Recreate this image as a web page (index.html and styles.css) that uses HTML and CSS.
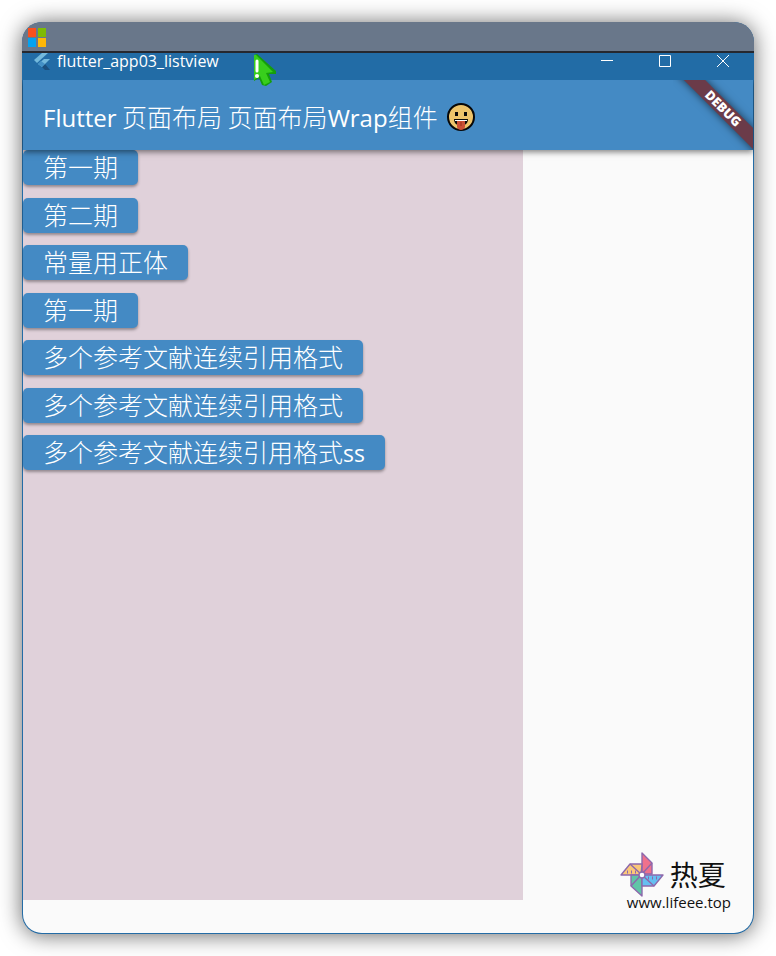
FILE: index.html
```html
<!DOCTYPE html>
<html lang="zh-CN">
<head>
<meta charset="utf-8">
<meta name="viewport" content="width=device-width, initial-scale=1">
<title>flutter_app03_listview</title>
<link rel="stylesheet" href="styles.css">
</head>
<body>
<div class="window">
  <div class="desktop-strip">
    <svg width="20" height="20" viewBox="0 0 20 20" aria-hidden="true">
      <path fill="#f8501f" d="M1 0h8v9H1z"/><path fill="#7ebb03" d="M11 0h8v9h-8z"/>
      <path fill="#04a2f0" d="M1 10h8v9H1z"/><path fill="#ffb706" d="M11 10h8v9h-8z"/>
    </svg>
  </div>
  <header class="titlebar">
    <svg class="app-icon" width="18" height="18" viewBox="0 0 18 18" aria-hidden="true">
      <path fill="#73b9dc" d="M8 0h6L3 10 0 7z"/><path fill="#73b9dc" d="M10 6h6l-5 5-3 3-4-3z"/>
      <path fill="#1b4f7d" d="m8 14 3-3 5 6h-5z"/><path fill="#4390c5" d="m4 11 3-3 4 3-3 3z"/>
    </svg>
    <span class="app-name">flutter_app03_listview</span>
    <div class="controls">
      <button aria-label="Minimize"><svg width="12" height="12" viewBox="0 0 12 12"><path d="M0 5.5h12"/></svg></button>
      <button aria-label="Maximize"><svg width="12" height="12" viewBox="0 0 12 12"><path d="M.5.5h11v11H.5z"/></svg></button>
      <button aria-label="Close"><svg width="12" height="12" viewBox="0 0 12 12"><path d="m0 0 12 12M12 0 0 12"/></svg></button>
    </div>
    <svg class="cursor" width="22" height="33" viewBox="0 0 22 33" aria-hidden="true">
      <path fill="#159e0b" d="M0 1 3 0 22 17v3h-7l3 8-6 4-4-1-3-7-5 3z"/>
      <path fill="#38ce1c" d="M0 1h2l17 17-7 1 4 9-6 3-4-9-6 4z"/>
      <path stroke="#fff" stroke-width="3" stroke-linecap="round" d="M3 7v10"/><circle cx="3" cy="22" r="2" fill="#fff"/>
    </svg>
  </header>
  <div class="appbar">
    <h1><span class="latin">Flutter</span> 页面布局 页面布局<span class="latin">Wrap</span>组件</h1>
    <svg class="emoji" width="30" height="30" viewBox="0 0 30 30" role="img" aria-label="吐舌笑脸">
      <circle cx="15" cy="15" r="13" fill="#edc46b" stroke="#080808" stroke-width="2"/>
      <path fill="#090909" d="M9 10h3v4H9zm9 0h3v4h-3zM8 17h14q0 5-4 6h-6q-4-1-4-6z"/>
      <path fill="#fff" d="M9 18h12v1H9z"/>
      <path fill="#c94f35" d="M11 19h8v6q-1 3-4 3t-4-3z"/><path stroke="#97301f" d="M15 20v4"/>
    </svg>
    <div class="debug"><span>DEBUG</span></div>
  </div>
  <main class="content">
    <div class="panel">
      <div class="wrap">
        <button>第一期</button>
        <button>第二期</button>
        <button>常量用正体</button>
        <button>第一期</button>
        <button>多个参考文献连续引用格式</button>
        <button>多个参考文献连续引用格式</button>
        <button>多个参考文献连续引用格式<span class="latin">ss</span></button>
      </div>
    </div>
    <aside class="brand">
      <div class="brand-top">
        <svg width="44" height="46" viewBox="0 0 44 46" stroke="#8d68ac" stroke-width="1.4" stroke-linejoin="round" aria-hidden="true">
          <path fill="#ef718c" d="M22 2 32 12v11H22z"/>
          <path fill="#fbc779" d="M22 13H10L1 24h20z"/>
          <path fill="#60c5a7" d="M11 24h11v21L11 35z"/>
          <path fill="#65bff1" d="M22 24h21l-9 11H22z"/>
          <path d="m10 13 12 11 12 11M32 12 11 35"/>
          <path stroke-dasharray="1 3" stroke-width="3" d="M7 21h10M28 27h10"/>
          <circle cx="22" cy="24" r="3" fill="#fff"/>
        </svg>
        <span class="brand-name">热夏</span>
      </div>
      <a href="#">www.lifeee.top</a>
    </aside>
  </main>
</div>
</body>
</html>
```
FILE: styles.css
```css
* { box-sizing: border-box; }
body {
  margin: 0;
  padding: 22px;
  min-height: 100vh;
  background: #fff;
  font-family: "Open Sans", "Noto Sans CJK SC", sans-serif;
}
button { border: 0; font: inherit; color: #fff; }
svg { display: block; fill: none; }
.window {
  display: flex;
  flex-direction: column;
  min-height: calc(100vh - 44px);
  border-radius: 20px;
  overflow: hidden;
  background: #246ca6;
  box-shadow: 0 1px 22px rgba(0, 0, 0, .6);
}
.desktop-strip {
  height: 31px;
  padding: 6px 5px;
  background: #69778a;
  border-bottom: 2px solid #26282f;
}
.titlebar {
  position: relative;
  z-index: 2;
  display: flex;
  align-items: flex-start;
  height: 27px;
  padding: 0 2px 0 12px;
  background: #226ca6;
  color: #fff;
}
.app-name { margin-left: 5px; font-size: 16px; line-height: 16px; }
.controls { display: flex; margin-left: auto; }
.controls button {
  display: flex;
  justify-content: center;
  width: 58px;
  height: 24px;
  padding: 2px 0;
  background: none;
}
.controls svg { stroke: #fff; }
.cursor { position: absolute; top: 1px; left: 232px; }
.appbar {
  position: relative;
  z-index: 1;
  display: flex;
  align-items: center;
  height: 70px;
  margin: 0 1px;
  padding: 4px 20px 0;
  background: #448ac4;
  color: #fff;
  box-shadow: 0 2px 6px rgba(0, 0, 0, .5);
}
h1 {
  margin: 0;
  font-family: "Noto Sans CJK SC", sans-serif;
  font-size: 25px;
  font-weight: 300;
  line-height: 36px;
  white-space: nowrap;
}
.latin { font-family: "Open Sans", sans-serif; font-size: 23px; font-weight: 400; }
h1 .latin { font-size: 24px; }
.emoji { margin-left: 8px; }
.debug {
  position: absolute;
  top: 0;
  right: 0;
  width: 80px;
  height: 70px;
  overflow: hidden;
}
.debug span {
  position: absolute;
  top: 21px;
  left: -10px;
  width: 120px;
  transform: rotate(45deg);
  background: #6b3b49;
  box-shadow: 0 0 8px rgba(0, 0, 0, .6);
  font: 900 13px/15px "Noto Sans", sans-serif;
  text-align: center;
}
.content {
  position: relative;
  flex: 1;
  margin: 0 1px 1px;
  border-radius: 0 0 19px 19px;
  background: #fafafa;
}
.panel { max-width: 500px; min-height: 750px; background: #e0d1da; }
.wrap {
  display: flex;
  flex-direction: column;
  align-items: flex-start;
  justify-content: space-between;
  height: 320px;
}
.wrap button {
  height: 35px;
  padding: 0 20px 2px;
  border-radius: 5px;
  background: #448ac4;
  box-shadow: 0 2px 3px rgba(0, 0, 0, .35);
  font-family: "Noto Sans CJK SC", sans-serif;
  font-size: 25px;
  font-weight: 300;
  line-height: 33px;
  white-space: nowrap;
}
.brand { position: absolute; right: 22px; bottom: 26px; color: #111; }
.brand-top { display: flex; align-items: center; margin-left: -7px; }
.brand-name {
  margin-left: 6px;
  font-family: "Noto Sans CJK SC", serif;
  font-size: 28px;
  line-height: 44px;
}
.brand a {
  display: block;
  color: #111;
  font-size: 15px;
  line-height: 10px;
  text-decoration: none;
}
```
